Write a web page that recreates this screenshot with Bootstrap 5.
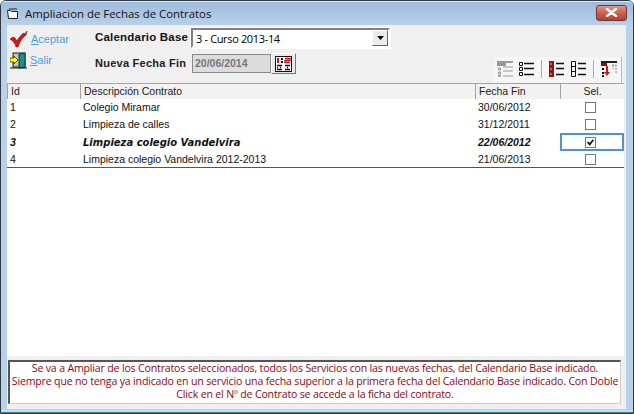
<!DOCTYPE html>
<html lang="es">
<head>
<meta charset="utf-8">
<title>Ampliacion de Fechas de Contratos</title>
<link href="https://cdn.jsdelivr.net/npm/bootstrap@5.3.0/dist/css/bootstrap.min.css" rel="stylesheet">
<style>
html,body{margin:0;height:100%;background:#fff;overflow:hidden}
body{font-family:"Liberation Sans",Arial,sans-serif;font-size:11px;color:#000;line-height:1}
.win{width:634px;height:414px;border:1px solid #2b3a44;border-radius:6px 6px 0 0;background:#b9d1e8;padding:0 7px 4px 6px;box-shadow:inset 0 -1px 0 #3d7f93,inset 0 -3px 0 #c6dcec}
.tbar{height:24px;margin:0 -7px 0 -6px;padding:0 6px;background:linear-gradient(#9fbbd9,#a9c5e2 45%,#b9d1e8);color:#111;border-top:1px solid #dfe9f3;border-radius:5px 5px 0 0}
.tbar-title{margin-left:6px;font-family:"Open Sans",sans-serif;font-size:11.4px}
.closex{width:31px;height:16px;margin-top:-2px;border:1px solid #6b3a33;border-radius:3px;background:linear-gradient(#dc9a8e,#c9604f 50%,#b8402f)}
.panel{width:619px;height:384px;background:#f0f0f0}
.top{height:58px}
.actions{width:76px;height:50px;margin-left:0;background:#efefef;padding:5px 0 0 3px;gap:3px;font-size:11px;color:#4a9fe0}
.act{height:18px;gap:3px}
.act u{text-underline-offset:1px}
.formwrap{padding:3px 0 0 12px;gap:5px}
.lbl{font-weight:700;color:#111;white-space:nowrap;flex-shrink:0}
.lbl-a{width:96px;font-size:11.5px;letter-spacing:.2px}
.lbl-b{width:97px;font-size:11px;letter-spacing:.25px;color:#222}
.combo{width:199px;height:20px;background:#fff;border:2px solid;border-color:#808080 #fff #fff #808080;outline:1px solid #fff;font-family:"Open Sans",sans-serif;font-size:11px}
.combo span{padding-left:3px;flex:1;letter-spacing:-.35px}
.combo b{width:16px;height:16px;background:#ececec;border:1px solid;border-color:#fff #666 #666 #fff;display:flex;align-items:center;justify-content:center}
.datef{width:79px;height:19px;background:#dcdcdc;border:1px solid #888;font-weight:700;color:#777;font-size:10.5px;padding-left:2px}
.cal{width:25px;height:21px;background:#e9e9e9;border:1px solid;border-color:#fff #777 #777 #fff}
.tools{margin-left:auto;margin-top:32px;margin-right:4px;height:26px;padding:0 4px 3px 3px;background:#f6f6f6;border-right:1px solid #bbb;gap:7px}
.tools svg:first-child{margin-right:-1px}
.tsep{width:1px;height:18px;background:#aaa}
.grid{height:273px;width:617px;background:#fff}
.gt{table-layout:fixed;width:617px;margin:0;--bs-table-bg:transparent;border-collapse:separate;border-spacing:0}
.gt th,.gt td{padding:0 3px;border:0;font-size:10.5px;color:#111;white-space:nowrap;overflow:hidden;font-weight:400}
.gt th{height:16px;background:#f2f2f2;border-top:1px solid #a3a3a3;border-left:1px solid #a3a3a3;border-bottom:0;color:#222;vertical-align:middle}
.gt tbody td{height:17px;background:#fff;vertical-align:middle}
.gt tbody tr.act-row td{height:18px;font-weight:700;font-style:italic;padding-top:1px}
.gt tbody tr.act-row td.bolder{font-family:"DejaVu Sans",sans-serif;font-size:10px}
.gt tbody tr:last-child td{border-bottom:1px solid #555}
.gt .cc{padding:0 3px 0 0;text-align:center}
.chk{display:inline-block;width:11px;height:11px;border:1px solid #777;background:#fff;vertical-align:middle}
.focus-cell{outline:2px solid #4d93d9;outline-offset:-2px}
.note{width:613px;height:44px;margin:4px 0 0 1px;background:#fff;border:1px solid;border-color:#555 #ccc #ccc #555;border-left-width:2px;border-top-width:2px;color:#8a0a16;font-family:"Open Sans",sans-serif;font-size:10.6px;text-align:center;line-height:13px;letter-spacing:-.18px;white-space:nowrap}
</style>
</head>
<body>
<div class="win d-flex flex-column">
  <div class="tbar d-flex align-items-center flex-shrink-0">
    <svg width="12" height="12" viewBox="0 0 12 12"><path d="M.5 2.500h3l1 1h6v7h-9z" fill="#fff" stroke="#222"/><path d="M2 1h8" stroke="#222"/></svg>
    <span class="tbar-title">Ampliacion de Fechas de Contratos</span>
    <span class="closex ms-auto d-flex align-items-center justify-content-center"><svg width="13" height="9" viewBox="0 0 13 9"><path d="M2 1l9 7M11 1L2 8" stroke="#fff" stroke-width="2.400" stroke-linecap="round"/></svg></span>
  </div>
  <div class="panel d-flex flex-column">
    <div class="top d-flex flex-shrink-0">
      <div class="actions d-flex flex-column">
        <div class="act d-flex align-items-center">
          <svg width="18" height="18" viewBox="0 0 18 18"><path d="M0 9l3-2 2 1 2 3C9 7 12 4 14 3l1 1 2-3-1 4c-3 2-6 6-8 12H6C5 13 3 11 0 9z" fill="#d81414" stroke="#3a1010" stroke-width=".5"/></svg>
          <span><u>A</u>ceptar</span>
        </div>
        <div class="act d-flex align-items-center">
          <svg width="17" height="17" viewBox="0 0 17 17"><rect x="3" y="1" width="12" height="14" fill="#c4c4c4" stroke="#222"/><path d="M9 2l6-1v14l-6 1z" fill="#1d8f86" stroke="#134"/><path d="M0 6h4V4l4 4-4 4v-2H0z" fill="#ff0" stroke="#222" stroke-width=".7"/><path d="M0 16h17" stroke="#111"/></svg>
          <span><u>S</u>alir</span>
        </div>
      </div>
      <div class="formwrap d-flex flex-column">
        <div class="d-flex align-items-center">
          <span class="lbl lbl-a">Calendario Base</span>
          <div class="combo d-flex align-items-center"><span>3 - Curso 2013-14</span><b><svg width="7" height="4"><path d="M0 0h7L3.500 4z" fill="#000"/></svg></b></div>
        </div>
        <div class="d-flex align-items-center">
          <span class="lbl lbl-b">Nueva Fecha Fin</span>
          <div class="datef d-flex align-items-center">20/06/2014</div>
          <div class="cal d-flex align-items-center justify-content-center">
            <svg width="17" height="16" viewBox="0 0 17 16"><rect x=".5" y=".5" width="16" height="15" fill="#fff" stroke="#111"/><path d="M3 2v5" stroke="#c41616" stroke-width="2"/><path d="M10 2.500h5v2h-5v2h5" stroke="#c41616" stroke-width="1.400" fill="none"/><path d="M6 2h2v2H6zM6 5h2v2H6z" fill="#111"/><path d="M2 9.500h5M2 13.500h5M10 9.500h5M10 13.500h5M2 11.500h1M5 11.500h1M12 11.500h1" stroke="#111" stroke-width="1.500"/></svg>
          </div>
        </div>
      </div>
      <div class="tools d-flex align-items-center">
        <svg width="16" height="16" viewBox="0 0 16 16"><path d="M0 0h16v2H0zM0 2h9v3H0z" fill="#999"/><path d="M1.500 7h2v2h-2zM1.500 11h2v2h-2zM1.500 14h2v1.500h-2z" fill="none" stroke="#999"/><path d="M6 6h10M6 10h10M6 15h10" stroke="#999"/></svg>
        <svg width="15" height="16" viewBox="0 0 15 16"><path d="M.5 1.500h3v3h-3zM.5 6.500h3v3h-3zM.5 11.500h3v3h-3z" fill="none" stroke="#111"/><path d="M5 2.500h10M5 7.500h10M5 13.500h10" stroke="#111" stroke-width="1.300"/></svg>
        <span class="tsep"></span>
        <svg width="15" height="16" viewBox="0 0 15 16"><path d="M0 0h5v16H0z" fill="#8e1616"/><path d="M1 2h2v2H1zM1 7h2v2H1zM1 12h2v2H1z" fill="#e55"/><path d="M7 2.500h8M7 7.500h8M7 13.500h8" stroke="#111" stroke-width="1.300"/></svg>
        <svg width="15" height="16" viewBox="0 0 15 16"><path d="M.5.500h4v15h-4zM.5 5.500h4M.5 10.500h4" fill="none" stroke="#111"/><path d="M7 2.500h8M7 7.500h8M7 13.500h8" stroke="#111" stroke-width="1.300"/></svg>
        <span class="tsep"></span>
        <svg width="16" height="16" viewBox="0 0 16 16"><path d="M0 0h16v2H0z" fill="#222"/><path d="M0 2h6v3H0z" fill="#7a1414"/><path d="M1 7h2v2H1zM1 11h2v2H1zM1 14h2v2H1z" fill="#111"/><path d="M6 5v8" stroke="#d41414" stroke-width="2"/><path d="M3 11h6l-3 4z" fill="#d41414"/><path d="M11 4h4M12 4v4M15 4v8" stroke="#888" stroke-dasharray="2 1"/></svg>
      </div>
    </div>
    <div class="grid flex-shrink-0">
      <table class="table gt">
        <colgroup><col style="width:73px"><col style="width:395px"><col style="width:85px"><col style="width:64px"></colgroup>
        <thead><tr><th>Id</th><th>Descripción Contrato</th><th>Fecha Fin</th><th class="text-center">Sel.</th></tr></thead>
        <tbody>
          <tr><td>1</td><td>Colegio Miramar</td><td>30/06/2012</td><td class="cc"><span class="chk"></span></td></tr>
          <tr><td>2</td><td>Limpieza de calles</td><td>31/12/2011</td><td class="cc"><span class="chk"></span></td></tr>
          <tr class="act-row"><td>3</td><td class="bolder">Limpieza colegio Vandelvira</td><td>22/06/2012</td><td class="cc focus-cell"><svg class="chk" viewBox="0 0 11 11"><path d="M2 5l2.500 3L9 2" fill="none" stroke="#000" stroke-width="2"/></svg></td></tr>
          <tr><td>4</td><td>Limpieza colegio Vandelvira 2012-2013</td><td>21/06/2013</td><td class="cc"><span class="chk"></span></td></tr>
        </tbody>
      </table>
    </div>
    <div class="note flex-shrink-0">Se va a Ampliar de los Contratos seleccionados, todos los Servicios con las nuevas fechas, del Calendario Base indicado.<br>Siempre que no tenga ya indicado en un servicio una fecha superior a la primera fecha del Calendario Base indicado. Con Doble<br>Click en el Nº de Contrato se accede a la ficha del contrato.</div>
  </div>
</div>
<script src="https://cdn.jsdelivr.net/npm/bootstrap@5.3.0/dist/js/bootstrap.bundle.min.js"></script>
</body>
</html>
